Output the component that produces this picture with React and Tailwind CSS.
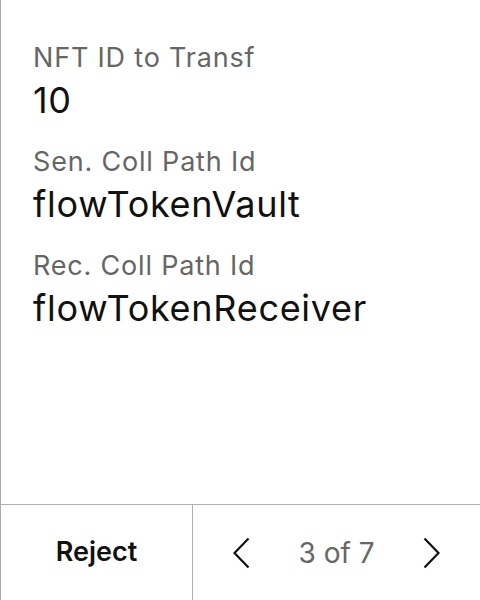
const fields = [
  { label: "NFT ID to Transf", value: "10" },
  { label: "Sen. Coll Path Id", value: "flowTokenVault" },
  { label: "Rec. Coll Path Id", value: "flowTokenReceiver" },
];

const Chevron = ({ dir }) => (
  <svg width="17" height="32" viewBox="0 0 17 32" fill="none">
    <path
      d={dir === "left" ? "M15.5 1.5 L1.5 16 L15.5 30.5" : "M1.5 1.5 L15.5 16 L1.5 30.5"}
      stroke="#111"
      strokeWidth="2.2"
      strokeLinecap="butt"
    />
  </svg>
);

export default function App() {
  return (
    <div
      className="flex h-[600px] w-[480px] flex-col border-l border-[#aaaaaa] bg-white"
      style={{ fontFamily: "Inter, 'Noto Sans', sans-serif" }}
    >
      <div className="flex flex-1 flex-col gap-[19px] pl-[32px] pt-[40px]">
        {fields.map((f) => (
          <div key={f.label} className="flex flex-col">
            <span className="text-[27px] leading-[36px] tracking-[0.03em] text-[#666666]">
              {f.label}
            </span>
            <span className="text-[36px] leading-[49px] tracking-[0.02em] text-[#111111]">
              {f.value}
            </span>
          </div>
        ))}
      </div>

      <div className="flex h-[96px] border-t border-[#b0b0b0]">
        <button
          type="button"
          className="flex w-[192px] items-center justify-center border-r border-[#b0b0b0] text-[27px] font-semibold text-[#111111]"
        >
          Reject
        </button>
        <div className="flex flex-1 items-center justify-center gap-[48px]">
          <Chevron dir="left" />
          <span className="text-[28px] text-[#666666]">3 of 7</span>
          <Chevron dir="right" />
        </div>
      </div>
    </div>
  );
}
